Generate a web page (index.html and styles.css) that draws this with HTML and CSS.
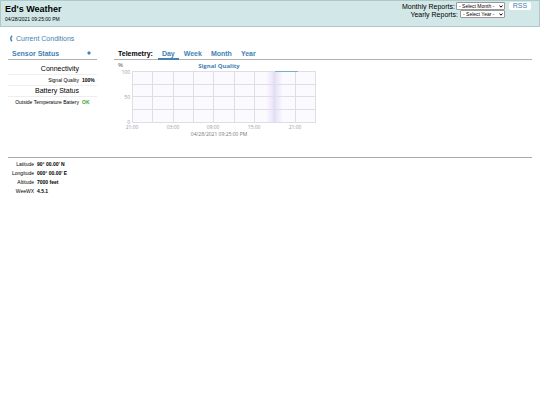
FILE: index.html
```
<!DOCTYPE html>
<html lang="en">
<head>
    <meta charset="UTF-8">
    <meta name="viewport" content="width=device-width, initial-scale=1.0">
    <title>Ed's Weather</title>
    <link rel="stylesheet" href="styles.css">
</head>
<body>
    <header class="title-bar">
        <div class="title">
            <h1>Ed's Weather</h1>
            <p class="lastupdate">04/28/2021 09:25:00 PM</p>
        </div>
        <div class="reports">
            <div class="report-row">
                <label for="month">Monthly Reports:</label>
                <select id="month" class="month"><option>- Select Month -</option></select>
                <a class="rss" href="#">RSS</a>
            </div>
            <div class="report-row">
                <label for="year">Yearly Reports:</label>
                <select id="year" class="year"><option>- Select Year -</option></select>
            </div>
        </div>
    </header>

    <main class="content">
        <a class="back" href="#"><svg class="chevron" viewBox="0 0 4 8"><path d="M3.2 .8Q.2 4 3.2 7.2" /></svg>Current Conditions</a>
        <div class="columns">
            <section class="sensors">
                <h2 class="widget-title">Sensor Status <svg class="diamond" viewBox="0 0 4 4"><path d="M2 0L4 2L2 4L0 2Z" /></svg></h2>
                <table class="sensor-table">
                    <tr><th class="group">Connectivity</th><td></td></tr>
                    <tr><th>Signal Quality</th><td>100%</td></tr>
                    <tr><th class="group">Battery Status</th><td></td></tr>
                    <tr><th>Outside Temperature Battery</th><td class="ok">OK</td></tr>
                </table>
            </section>
            <section class="telemetry">
                <nav class="tabs">
                    <span>Telemetry:</span>
                    <a class="active" href="#">Day</a>
                    <a href="#">Week</a>
                    <a href="#">Month</a>
                    <a href="#">Year</a>
                </nav>
                <svg class="chart" viewBox="0 0 208 80" role="img" aria-label="Signal Quality">
                    <defs>
                        <linearGradient id="dusk">
                            <stop offset="0" stop-color="#fcfaff" />
                            <stop offset=".3" stop-color="#f1eafc" />
                            <stop offset=".5" stop-color="#e5e0f7" />
                            <stop offset="1" stop-color="#fbfaff" />
                        </linearGradient>
                    </defs>
                    <rect x="18" y="12" width="184" height="51" fill="#fbfaff" />
                    <rect x="152" y="12" width="17" height="51" fill="url(#dusk)" />
                    <path class="grid" d="M18.5 11V63M38.5 11V63M59.5 11V63M79.5 11V63M99.5 11V63M120.5 11V63M140.5 11V63M160.5 11V63M181.5 11V63M201.5 11V63M18 11.5H202M18 24.5H202M18 36.5H202M18 49.5H202M18 62.5H202" />
                    <path class="line" d="M161 11.5H184" />
                    <text class="chart-title" x="105" y="8">Signal Quality</text>
                    <text class="unit" x="4" y="7">%</text>
                    <g class="y-labels">
                        <text x="16" y="14">100</text>
                        <text x="16" y="39">50</text>
                        <text x="16" y="64">0</text>
                    </g>
                    <g class="x-labels">
                        <text x="18" y="69">21:00</text>
                        <text x="59" y="69">03:00</text>
                        <text x="99" y="69">09:00</text>
                        <text x="140" y="69">15:00</text>
                        <text x="181" y="69">21:00</text>
                    </g>
                    <text class="chart-date" x="105" y="76">04/28/2021 09:25:00 PM</text>
                </svg>
            </section>
        </div>
    </main>

    <footer class="about">
        <table class="about-table">
            <tr><th>Latitude</th><td>90° 00.00' N</td></tr>
            <tr><th>Longitude</th><td>000° 00.00' E</td></tr>
            <tr><th>Altitude</th><td>7000 feet</td></tr>
            <tr><th>WeeWX</th><td>4.5.1</td></tr>
        </table>
    </footer>
</body>
</html>
```

FILE: styles.css
```
* {
    box-sizing: border-box;
}

body {
    margin: 0;
    font-family: "Liberation Sans", Arial, sans-serif;
    font-size: 7px;
    color: #000;
    background: #fff;
}

h1, h2, p {
    margin: 0;
}

a {
    color: #4282b4;
    text-decoration: none;
}

table {
    border-collapse: collapse;
}

th, td {
    padding: 0;
}

.title-bar {
    display: flex;
    justify-content: space-between;
    height: 27px;
    padding: 1px 8px 0 4px;
    background: #d2e8e8;
    border: 1px solid #b0c8c8;
}

.title h1 {
    font-size: 9px;
    line-height: 14px;
}

.lastupdate {
    font-size: 5px;
    line-height: 6px;
}

.reports {
    display: grid;
    align-content: start;
}

.report-row {
    display: flex;
    align-items: center;
    height: 8px;
}

.report-row label {
    width: 52px;
    text-align: right;
    white-space: nowrap;
}

.report-row:last-child label {
    width: 56px;
}

select {
    height: 8px;
    margin-left: 2px;
    padding: 0 6px 0 2px;
    font-family: inherit;
    font-size: 5px;
    line-height: 6px;
    color: #000;
    background: #fff url("data:image/svg+xml,%3Csvg xmlns='http://www.w3.org/2000/svg' viewBox='0 0 4 3'%3E%3Cpath d='M.5 .5L2 2.2L3.5 .5' fill='none' stroke='black'/%3E%3C/svg%3E") no-repeat right 1px center / 4px 3px;
    border: 1px solid #999;
    border-radius: 1px;
    appearance: none;
}

.month {
    width: 49px;
}

.year {
    width: 45px;
}

.rss {
    width: 22px;
    margin-left: 4px;
    line-height: 8px;
    text-align: center;
    background: #fff;
    border-radius: 2px;
}

.content {
    padding: 7px 8px 0;
}

.back {
    display: flex;
    align-items: center;
    gap: 3px;
    height: 9px;
}

.chevron {
    width: 4px;
    height: 7px;
    margin-left: 1px;
    fill: none;
    stroke: #4282b4;
    stroke-width: 1.6;
}

.columns {
    display: flex;
    gap: 17px;
    height: 114px;
    padding-top: 6px;
}

.sensors {
    width: 89px;
}

.widget-title {
    display: flex;
    justify-content: space-between;
    align-items: center;
    height: 11px;
    padding: 0 6px 2px 4px;
    font-size: 7px;
    color: #4282b4;
    border-bottom: 1px solid #b0b0b0;
}

.diamond {
    width: 4px;
    height: 4px;
    fill: #4282b4;
}

.sensor-table {
    width: 100%;
    margin-top: 3px;
}

.sensor-table tr {
    height: 11px;
    border-bottom: 1px solid #eee;
}

.sensor-table tr:last-child {
    border-bottom: 0;
}

.sensor-table th {
    font-size: 5px;
    font-weight: normal;
    text-align: right;
    white-space: nowrap;
}

.sensor-table .group {
    font-size: 7px;
}

.sensor-table td {
    width: 18px;
    padding-left: 3px;
    font-size: 5px;
    font-weight: bold;
}

.sensor-table .ok {
    color: #38a838;
}

.telemetry {
    flex: 1;
}

.tabs {
    display: flex;
    gap: 1px;
    height: 11px;
    padding-left: 4px;
    font-weight: bold;
    line-height: 9px;
    border-bottom: 1px solid #b0b0b0;
}

.tabs span {
    margin-right: 4px;
}

.tabs a {
    height: 11px;
    padding: 0 4px;
}

.tabs .active {
    border-bottom: 2px solid #4282b4;
}

.chart {
    display: block;
    width: 208px;
    height: 80px;
    font-family: "Open Sans", sans-serif;
}

.grid {
    fill: none;
    stroke: #e0dee4;
}

.line {
    fill: none;
    stroke: #7eb0c4;
}

.chart-title {
    font-size: 6px;
    font-weight: bold;
    text-anchor: middle;
    fill: #4282b4;
}

.unit {
    font-size: 6px;
    fill: #555;
}

.y-labels {
    font-size: 5px;
    text-anchor: end;
    fill: #999;
}

.x-labels {
    font-size: 5px;
    text-anchor: middle;
    fill: #999;
}

.chart-date {
    font-size: 5px;
    text-anchor: middle;
    fill: #777;
}

.about {
    margin: 0 8px;
    padding-top: 1px;
    border-top: 1px solid #aaa;
}

.about-table th {
    width: 26px;
    height: 9px;
    font-size: 5px;
    font-weight: normal;
    text-align: right;
}

.about-table td {
    padding-left: 3px;
    font-size: 5px;
    font-weight: bold;
}
```
